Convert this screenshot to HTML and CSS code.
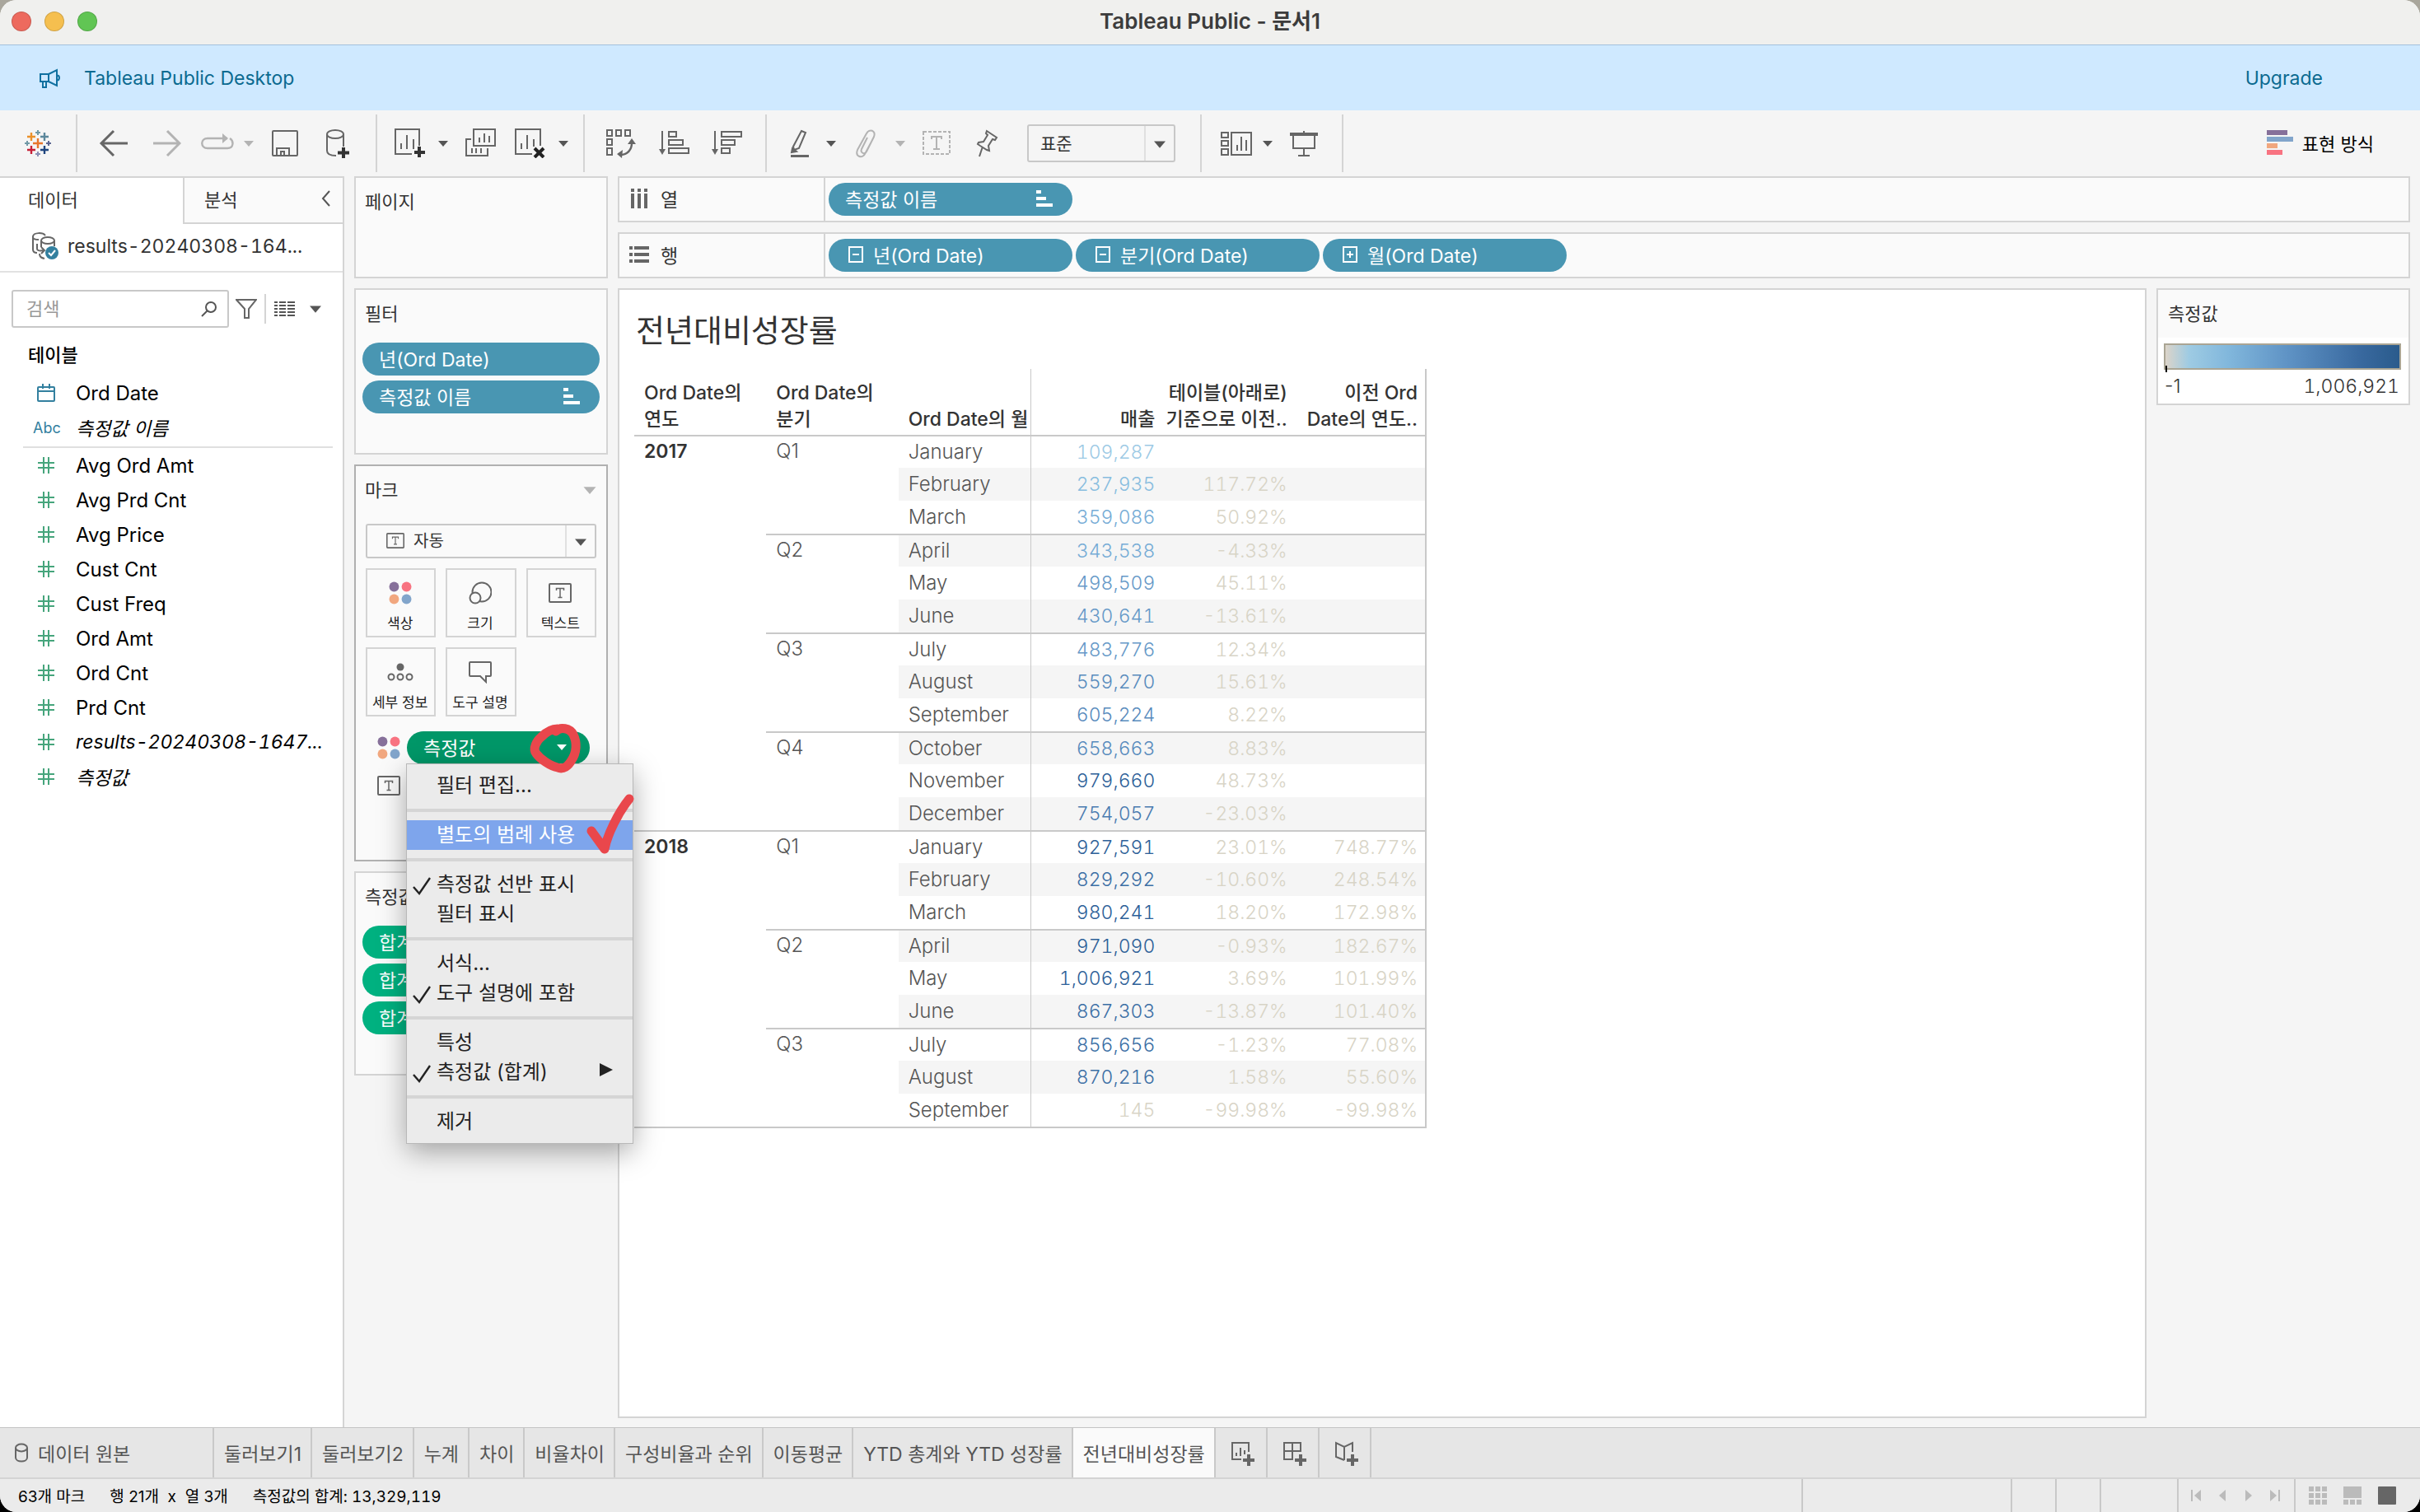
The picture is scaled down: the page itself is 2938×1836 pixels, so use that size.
FILE: index.html
```html
<!DOCTYPE html>
<html lang="ko">

<head>
    <meta charset="UTF-8">
    <meta name="viewport" content="width=device-width, initial-scale=1.0">
    <title>Tableau Public - 문서1</title>
    <link rel="stylesheet" href="styles.css">
</head>

<body>

    <!-- Shared icon shapes -->
    <svg class="sprite" aria-hidden="true">
        <symbol id="caret" viewBox="0 0 12 8"><path d="M0 1h12L6 8z" fill="currentColor"/></symbol>
        <symbol id="hash" viewBox="0 0 22 22"><path d="M8 1v20M14 1v20M1 8h20M1 14h20" fill="none" stroke="#46a57c" stroke-width="2"/></symbol>
        <symbol id="sort" viewBox="0 0 20 20"><path d="M0 0h6v4H0zM0 8h12v4H0zM0 16h20v4H0z" fill="currentColor"/></symbol>
        <symbol id="dots" viewBox="0 0 26 26"><circle cx="6" cy="6" r="5.5" fill="#86709a"/><circle cx="20" cy="6" r="5.5" fill="#f87381"/><circle cx="6" cy="20" r="5.5" fill="#f1a77f"/><circle cx="20" cy="20" r="5.5" fill="#82a5cb"/></symbol>
        <symbol id="textbox" viewBox="0 0 28 24"><rect x="1" y="1" width="26" height="22" rx="1" fill="none" stroke="#666" stroke-width="2"/><path d="M9.500 9V6.500h9V9M14 6.500v11M11.500 17.500h5" fill="none" stroke="#666" stroke-width="1.500"/></symbol>
        <symbol id="check" viewBox="0 0 22 22"><path d="M1 12l7 8L21 1" fill="none" stroke="#222" stroke-width="2.400"/></symbol>
    </svg>

    <div class="window">
        <header class="titlebar">
            <div class="lights"><span class="light red"></span><span class="light yellow"></span><span class="light green"></span></div>
            <h1 class="window-title">Tableau Public - 문서1</h1>
        </header>

        <div class="banner">
            <svg width="26" height="24" viewBox="0 0 26 24" fill="none" stroke="#1070a0" stroke-width="2"><path d="M1 7h10v9H1zM11 7l10-5v19l-10-5M4 16v7h4v-7M21 8c4 1 4 6 0 7"/></svg>
            <span>Tableau Public Desktop</span>
            <a class="upgrade" href="#">Upgrade</a>
        </div>

        <!-- Toolbar -->
        <nav class="toolbar">
            <div class="tool-group logo-group">
                <button class="tool" aria-label="시작 페이지">
                    <svg width="36" height="36" viewBox="0 0 36 36" fill="none" stroke-width="2.400"><path d="M18 12v12M12 18h12" stroke="#e8762c"/><path d="M10 5v10M5 10h10" stroke="#eb912b"/><path d="M26 5v10M21 10h10" stroke="#5b879b"/><path d="M10 21v10M5 26h10" stroke="#c72037"/><path d="M26 21v10M21 26h10" stroke="#1f457e"/><path d="M18 2v6M15 5h6M5 15v6M2 18h6" stroke="#7199a6" stroke-width="2"/><path d="M18 28v6M15 31h6" stroke="#8a8fb5" stroke-width="2"/><path d="M31 15v6M28 18h6" stroke="#5c6692" stroke-width="2"/></svg>
                </button>
            </div>
            <div class="tool-group history-group">
                <button class="tool" aria-label="실행 취소"><svg width="40" height="36" viewBox="0 0 40 36" fill="none" stroke="#666" stroke-width="3"><path d="M18 3L3 18l15 15M3 18h32"/></svg></button>
                <button class="tool" aria-label="다시 실행"><svg width="40" height="36" viewBox="0 0 40 36" fill="none" stroke="#b3b3b3" stroke-width="3"><path d="M23 3l15 15-15 15M38 18H6"/></svg></button>
                <div class="split">
                    <button class="tool wide" aria-label="재생"><svg width="44" height="36" viewBox="0 0 44 36" fill="none" stroke="#b3b3b3" stroke-width="2.400"><path d="M36 12h-24c-9 0-9 12 0 12h24c8 0 8-9 3-12"/><path d="M30 6v12l7-6z" fill="#b3b3b3" stroke="none"/></svg></button>
                    <button class="caret off" aria-label="재생 옵션"><svg width="12" height="8"><use href="#caret"/></svg></button>
                </div>
                <button class="tool" aria-label="저장"><svg width="40" height="36" viewBox="0 0 40 36" fill="none" stroke="#666" stroke-width="2"><rect x="3" y="3" width="30" height="30" rx="1"/><path d="M8 33V24h15v9M13 33v-5h4v5"/></svg></button>
                <button class="tool" aria-label="새 데이터 원본"><svg width="40" height="36" viewBox="0 0 40 36" fill="none" stroke="#666" stroke-width="2"><ellipse cx="19" cy="7" rx="10" ry="5"/><path d="M9 7v20c0 4 4 6 11 6M29 7v15"/><path d="M29 23v13M22 29.500h14" stroke="#333" stroke-width="4"/></svg></button>
            </div>
            <div class="tool-group sheet-group">
                <div class="split">
                    <button class="tool" aria-label="새 워크시트"><svg width="40" height="36" viewBox="0 0 40 36" fill="none" stroke="#666" stroke-width="2"><path d="M31 21V1H2v30h20M9 18v7M16 8v17M24 13v12"/><path d="M31 22v13M25 29h13" stroke="#333" stroke-width="4"/></svg></button>
                    <button class="caret" aria-label="새 워크시트 옵션"><svg width="12" height="8"><use href="#caret"/></svg></button>
                </div>
                <button class="tool" aria-label="복제"><svg width="40" height="36" viewBox="0 0 40 36" fill="none" stroke="#666" stroke-width="2"><rect x="11" y="1" width="26" height="20"/><path d="M8 13H2v20h26v-9M18 11v6M24 6v11M30 9v8M9 24v6M14 24v6M20 24v6"/></svg></button>
                <div class="split">
                    <button class="tool" aria-label="시트 지우기"><svg width="40" height="36" viewBox="0 0 40 36" fill="none" stroke="#666" stroke-width="2"><path d="M32 21V1H2v30h20M9 18v7M16 8v17M24 13v9"/><path d="M25 24l11 11M36 24L25 35" stroke="#222" stroke-width="4"/></svg></button>
                    <button class="caret" aria-label="지우기 옵션"><svg width="12" height="8"><use href="#caret"/></svg></button>
                </div>
            </div>
            <div class="tool-group sort-group">
                <button class="tool" aria-label="행과 열 바꾸기"><svg width="40" height="36" viewBox="0 0 40 36" fill="none" stroke="#666" stroke-width="2"><path d="M1 2h6v7H1zM12 2h6v7h-6zM23 2h6v7h-6zM1 13h6v7H1zM1 24h6v8H1z"/><path d="M31 18c0 7-5 14-13 14" stroke-width="2.400"/><path d="M26 19l5-7 5 7zM20 26l-7 5 6 5z" fill="#666" stroke="none"/></svg></button>
                <button class="tool" aria-label="오름차순 정렬"><svg width="40" height="36" viewBox="0 0 40 36" fill="none" stroke="#666" stroke-width="2"><path d="M4 3v24M12 4h9v6h-9zM12 14h17v6H12zM12 24h24v6H12z"/><path d="M0 25h8l-4 7z" fill="#666" stroke="none"/></svg></button>
                <button class="tool" aria-label="내림차순 정렬"><svg width="40" height="36" viewBox="0 0 40 36" fill="none" stroke="#666" stroke-width="2"><path d="M4 3v24M12 4h24v6H12zM12 14h16v6H12zM12 24h10v6H12z"/><path d="M0 25h8l-4 7z" fill="#666" stroke="none"/></svg></button>
            </div>
            <div class="tool-group">
                <div class="split">
                    <button class="tool" aria-label="하이라이트"><svg width="40" height="36" viewBox="0 0 40 36" fill="none" stroke="#666" stroke-width="2"><path d="M22 3l5 2-8 19-6 2-1-4z"/><path d="M11 24l5 4-6 1z" fill="#666"/><path d="M9 33.500h22" stroke-width="3"/></svg></button>
                    <button class="caret" aria-label="하이라이트 옵션"><svg width="12" height="8"><use href="#caret"/></svg></button>
                </div>
                <div class="split">
                    <button class="tool" aria-label="그룹"><svg width="40" height="36" viewBox="0 0 40 36" fill="none" stroke="#b3b3b3" stroke-width="2"><path d="M18 11l-7 14c-2 5 4 7 6 3l9-18c3-8-6-10-9-4L6 26c-3 8 5 11 9 5l8-15"/></svg></button>
                    <button class="caret off" aria-label="그룹 옵션"><svg width="12" height="8"><use href="#caret"/></svg></button>
                </div>
                <button class="tool" aria-label="마크 레이블 표시"><svg width="40" height="36" viewBox="0 0 40 36" fill="none" stroke="#b3b3b3" stroke-width="2"><rect x="2" y="4" width="32" height="27" stroke-dasharray="4 2"/><path d="M12 13V10h12v3M18 10v15M14 25h8"/></svg></button>
                <button class="tool" aria-label="고정"><svg width="40" height="36" viewBox="0 0 40 36" fill="none" stroke="#666" stroke-width="2"><path d="M19 3l12 8-2 3-3-1-5 8 1 6-3-1-8-5-3-2 1-2 6-1 5-8-2-2zM14 22L10 34"/></svg></button>
                <div class="fit-select">
                    <select class="select" aria-label="맞춤"><option>표준</option></select>
                    <svg class="select-arrow" width="14" height="10"><use href="#caret"/></svg>
                </div>
            </div>
            <div class="tool-group last-group">
                <div class="split">
                    <button class="tool" aria-label="카드 표시"><svg width="40" height="36" viewBox="0 0 40 36" fill="none" stroke="#666" stroke-width="2"><path d="M2 5h8v6H2zM2 15h8v6H2zM2 25h8v7H2zM14 5h24v27H14zM21 20v7M26 10v17M32 14v13"/></svg></button>
                    <button class="caret" aria-label="카드 옵션"><svg width="12" height="8"><use href="#caret"/></svg></button>
                </div>
                <button class="tool" aria-label="프레젠테이션 모드"><svg width="40" height="36" viewBox="0 0 40 36" fill="none" stroke="#666" stroke-width="2"><path d="M18 3v4M5 8v16h26V8M18 24v9M11 33h14"/><path d="M1 7h34" stroke-width="4"/></svg></button>
            </div>
            <button class="show-me">
                <svg width="32" height="30" viewBox="0 0 32 30"><path d="M0 0h25v6H0z" fill="#86709a"/><path d="M0 8h32v6H0z" fill="#82a5cb"/><path d="M0 16h13v6H0z" fill="#f1a77f"/><path d="M0 24h19v6H0z" fill="#f87381"/></svg>
                표현 방식
            </button>
        </nav>

        <main class="workspace">
            <!-- Data pane -->
            <aside class="data-pane">
                <div class="pane-tabs">
                    <button class="pane-tab active">데이터</button>
                    <button class="pane-tab">분석 <svg width="12" height="20" viewBox="0 0 12 20" fill="none" stroke="#555" stroke-width="2"><path d="M10 1L2 10l8 9"/></svg></button>
                </div>
                <div class="source">
                    <svg width="34" height="34" viewBox="0 0 34 34" fill="none" stroke="#666" stroke-width="2"><path d="M17 4c-3-4-14-4-15 1v16c0 3 2 4 5 4M2 6c0 2 3 3 7 3"/><ellipse cx="20" cy="10" rx="8" ry="4"/><path d="M12 10v8M28 10v7M7 14v6c0 2 2 3 8 2M12 18l4 4-4 4M10 26c0 4 2 5 6 6"/><circle cx="25" cy="25" r="8" fill="#33809f" stroke="none"/><path d="M21 25l3 3 5-6" stroke="#fff"/></svg>
                    <span class="digits">results-20240308-164...</span>
                </div>
                <div class="search-row">
                    <div class="search">
                        <input type="text" placeholder="검색" aria-label="검색">
                        <svg width="20" height="20" viewBox="0 0 20 20" fill="none" stroke="#555" stroke-width="2"><circle cx="12" cy="8" r="6"/><path d="M8 12l-7 7"/></svg>
                    </div>
                    <button class="plain" aria-label="필터"><svg width="26" height="26" viewBox="0 0 26 26" fill="none" stroke="#666" stroke-width="2"><path d="M1 2h24l-9 11v11h-5V13z"/></svg></button>
                    <span class="search-sep"></span>
                    <button class="plain view-by" aria-label="보기">
                        <svg width="25" height="20" viewBox="0 0 25 20" stroke="#555" stroke-width="2"><path d="M0 2h25M0 6h25M0 10h25M0 14h25M0 18h25" stroke-dasharray="4 2 8 2 9 0"/></svg>
                        <svg width="14" height="10"><use href="#caret"/></svg>
                    </button>
                </div>
                <h2 class="tables-title">테이블</h2>
                <ul class="fields dims">
                    <li><svg width="22" height="22" viewBox="0 0 22 22" fill="none" stroke="#33809f" stroke-width="2"><rect x="1" y="4" width="20" height="17" rx="1"/><path d="M1 9h20M7 0v6M15 0v6"/></svg>Ord Date</li>
                    <li><span class="abc">Abc</span><i>측정값 이름</i></li>
                </ul>
                <ul class="fields">
                    <li><svg width="22" height="22"><use href="#hash"/></svg>Avg Ord Amt</li>
                    <li><svg width="22" height="22"><use href="#hash"/></svg>Avg Prd Cnt</li>
                    <li><svg width="22" height="22"><use href="#hash"/></svg>Avg Price</li>
                    <li><svg width="22" height="22"><use href="#hash"/></svg>Cust Cnt</li>
                    <li><svg width="22" height="22"><use href="#hash"/></svg>Cust Freq</li>
                    <li><svg width="22" height="22"><use href="#hash"/></svg>Ord Amt</li>
                    <li><svg width="22" height="22"><use href="#hash"/></svg>Ord Cnt</li>
                    <li><svg width="22" height="22"><use href="#hash"/></svg>Prd Cnt</li>
                    <li><svg width="22" height="22"><use href="#hash"/></svg><i class="digits">results-20240308-1647...</i></li>
                    <li><svg width="22" height="22"><use href="#hash"/></svg><i>측정값</i></li>
                </ul>
            </aside>

            <!-- Cards column -->
            <section class="cards">
                <div class="card pages"><h2>페이지</h2></div>
                <div class="card filters">
                    <h2>필터</h2>
                    <button class="pill">년(Ord Date)</button>
                    <button class="pill">측정값 이름 <svg class="pill-sort" width="20" height="20"><use href="#sort"/></svg></button>
                </div>
                <div class="card marks">
                    <h2>마크 <svg width="16" height="10"><use href="#caret"/></svg></h2>
                    <div class="mark-type">
                        <svg class="type-icon" width="22" height="19"><use href="#textbox"/></svg>
                        <select class="select" aria-label="마크 유형"><option>자동</option></select>
                        <svg class="select-arrow" width="14" height="10"><use href="#caret"/></svg>
                    </div>
                    <div class="mark-grid">
                        <button class="mark-btn"><svg width="28" height="28"><use href="#dots"/></svg>색상</button>
                        <button class="mark-btn"><svg width="28" height="28" viewBox="0 0 28 28" fill="#fafafa" stroke="#666" stroke-width="2"><circle cx="16" cy="13" r="11.500"/><circle cx="8" cy="20" r="6.500"/></svg>크기</button>
                        <button class="mark-btn"><svg width="28" height="28"><use href="#textbox"/></svg>텍스트</button>
                        <button class="mark-btn"><svg width="32" height="28" viewBox="0 0 32 28" fill="none" stroke="#666" stroke-width="2"><circle cx="16" cy="8" r="4.500" fill="#666" stroke="none"/><circle cx="5" cy="20" r="3.500"/><circle cx="16" cy="20" r="3.500"/><circle cx="27" cy="20" r="3.500"/></svg>세부 정보</button>
                        <button class="mark-btn"><svg width="28" height="28" viewBox="0 0 28 28" fill="none" stroke="#666" stroke-width="2"><path d="M2 2h24q1 0 1 1v15q0 1-1 1h-5v7l-7-7H2q-1 0-1-1V3q0-1 1-1z"/></svg>도구 설명</button>
                    </div>
                    <div class="mark-rows">
                        <svg width="28" height="28"><use href="#dots"/></svg>
                        <div class="pill-wrap">
                            <button class="pill green open">측정값 <svg class="pill-caret" width="12" height="8"><use href="#caret"/></svg></button>
                            <!-- Context menu of the pill -->
                            <ul class="menu">
                                <li><button>필터 편집...</button></li>
                                <li class="sep"></li>
                                <li><button class="hot">별도의 범례 사용</button></li>
                                <li class="sep"></li>
                                <li><button><svg class="tick" width="22" height="22"><use href="#check"/></svg>측정값 선반 표시</button></li>
                                <li><button>필터 표시</button></li>
                                <li class="sep"></li>
                                <li><button>서식...</button></li>
                                <li><button><svg class="tick" width="22" height="22"><use href="#check"/></svg>도구 설명에 포함</button></li>
                                <li class="sep"></li>
                                <li><button>특성</button></li>
                                <li><button><svg class="tick" width="22" height="22"><use href="#check"/></svg>측정값 (합계)<svg class="submenu" width="16" height="16" viewBox="0 0 16 16"><path d="M0 0l16 8-16 8z" fill="#222"/></svg></button></li>
                                <li class="sep"></li>
                                <li><button>제거</button></li>
                            </ul>
                            <svg class="pen" width="150" height="180" viewBox="0 0 150 180" fill="none" stroke="#e9474c" stroke-width="11" stroke-linecap="round" stroke-linejoin="round"><path d="M41 20C46 14 58 16 62 24C67 34 66 46 60 55C56 62 50 67 43 64C34 62 22 54 17 47C12 41 18 31 23 27C30 20 37 17 43 17"/><path d="M84 141L100 163C103 146 117 118 130 102"/></svg>
                        </div>
                        <svg width="28" height="24"><use href="#textbox"/></svg>
                    </div>
                </div>
                <div class="card values">
                    <h2>측정값</h2>
                    <button class="pill green">합계</button>
                    <button class="pill green">합계</button>
                    <button class="pill green">합계</button>
                </div>
            </section>

            <section class="canvas">
                <div class="shelf">
                    <div class="shelf-name"><svg width="24" height="24" viewBox="0 0 24 24" fill="#666"><path d="M2 0h4v4H2zM10 0h4v4h-4zM18 0h4v4h-4zM2 6h4v18H2zM10 6h4v18h-4zM18 6h4v18h-4z"/></svg>열</div>
                    <div class="shelf-pills">
                        <button class="pill">측정값 이름 <svg class="pill-sort" width="20" height="20"><use href="#sort"/></svg></button>
                    </div>
                </div>
                <div class="shelf">
                    <div class="shelf-name"><svg width="24" height="24" viewBox="0 0 24 24" fill="#666"><path d="M0 2h4v4H0zM0 10h4v4H0zM0 18h4v4H0zM6 2h18v4H6zM6 10h18v4H6zM6 18h18v4H6z"/></svg>행</div>
                    <div class="shelf-pills">
                        <button class="pill date"><svg width="18" height="20" viewBox="0 0 18 20" fill="none" stroke="#fff" stroke-width="2"><path d="M1 1h16v18H1zM5 10h8"/></svg>년(Ord Date)</button>
                        <button class="pill date"><svg width="18" height="20" viewBox="0 0 18 20" fill="none" stroke="#fff" stroke-width="2"><path d="M1 1h16v18H1zM5 10h8"/></svg>분기(Ord Date)</button>
                        <button class="pill date"><svg width="18" height="20" viewBox="0 0 18 20" fill="none" stroke="#fff" stroke-width="2"><path d="M1 1h16v18H1zM5 10h8M9 6v8"/></svg>월(Ord Date)</button>
                    </div>
                </div>

                <div class="view-row">
                    <div class="view">
                        <h2 class="sheet-title">전년대비성장률</h2>
                        <table class="crosstab">
                            <thead>
                                <tr>
                                    <th>Ord Date의<br>연도</th>
                                    <th>Ord Date의<br>분기</th>
                                    <th>Ord Date의 월</th>
                                    <th class="num first">매출</th>
                                    <th class="num">테이블(아래로)<br>기준으로 이전..</th>
                                    <th class="num last">이전 Ord<br>Date의 연도..</th>
                                </tr>
                            </thead>
                            <tbody>
                                <tr class="rule"><th rowspan="12" class="year">2017</th><td rowspan="3" class="quarter">Q1</td><td class="month">January</td><td class="num first b1">109,287</td><td class="num"></td><td class="num last"></td></tr>
                                <tr class="band"><td class="month">February</td><td class="num first b2">237,935</td><td class="num">117.72%</td><td class="num last"></td></tr>
                                <tr><td class="month">March</td><td class="num first b3">359,086</td><td class="num">50.92%</td><td class="num last"></td></tr>
                                <tr class="rule band"><td rowspan="3" class="quarter">Q2</td><td class="month">April</td><td class="num first b3">343,538</td><td class="num">-4.33%</td><td class="num last"></td></tr>
                                <tr><td class="month">May</td><td class="num first b4">498,509</td><td class="num">45.11%</td><td class="num last"></td></tr>
                                <tr class="band"><td class="month">June</td><td class="num first b4">430,641</td><td class="num">-13.61%</td><td class="num last"></td></tr>
                                <tr class="rule"><td rowspan="3" class="quarter">Q3</td><td class="month">July</td><td class="num first b4">483,776</td><td class="num">12.34%</td><td class="num last"></td></tr>
                                <tr class="band"><td class="month">August</td><td class="num first b5">559,270</td><td class="num">15.61%</td><td class="num last"></td></tr>
                                <tr><td class="month">September</td><td class="num first b5">605,224</td><td class="num">8.22%</td><td class="num last"></td></tr>
                                <tr class="rule band"><td rowspan="3" class="quarter">Q4</td><td class="month">October</td><td class="num first b5">658,663</td><td class="num">8.83%</td><td class="num last"></td></tr>
                                <tr><td class="month">November</td><td class="num first b8">979,660</td><td class="num">48.73%</td><td class="num last"></td></tr>
                                <tr class="band"><td class="month">December</td><td class="num first b6">754,057</td><td class="num">-23.03%</td><td class="num last"></td></tr>
                                <tr class="rule"><th rowspan="9" class="year">2018</th><td rowspan="3" class="quarter">Q1</td><td class="month">January</td><td class="num first b8">927,591</td><td class="num">23.01%</td><td class="num last">748.77%</td></tr>
                                <tr class="band"><td class="month">February</td><td class="num first b7">829,292</td><td class="num">-10.60%</td><td class="num last">248.54%</td></tr>
                                <tr><td class="month">March</td><td class="num first b8">980,241</td><td class="num">18.20%</td><td class="num last">172.98%</td></tr>
                                <tr class="rule band"><td rowspan="3" class="quarter">Q2</td><td class="month">April</td><td class="num first b8">971,090</td><td class="num">-0.93%</td><td class="num last">182.67%</td></tr>
                                <tr><td class="month">May</td><td class="num first b8">1,006,921</td><td class="num">3.69%</td><td class="num last">101.99%</td></tr>
                                <tr class="band"><td class="month">June</td><td class="num first b7">867,303</td><td class="num">-13.87%</td><td class="num last">101.40%</td></tr>
                                <tr class="rule"><td rowspan="3" class="quarter">Q3</td><td class="month">July</td><td class="num first b7">856,656</td><td class="num">-1.23%</td><td class="num last">77.08%</td></tr>
                                <tr class="band"><td class="month">August</td><td class="num first b7">870,216</td><td class="num">1.58%</td><td class="num last">55.60%</td></tr>
                                <tr><td class="month">September</td><td class="num first">145</td><td class="num">-99.98%</td><td class="num last">-99.98%</td></tr>
                            </tbody>
                        </table>
                    </div>
                    <div class="legend">
                        <h2>측정값</h2>
                        <div class="legend-body">
                            <div class="ramp"><span class="ramp-mark"></span></div>
                            <div class="ramp-labels"><span>-1</span><span class="digits">1,006,921</span></div>
                        </div>
                    </div>
                </div>
            </section>
        </main>

        <!-- Sheet tabs -->
        <nav class="sheets">
            <button class="sheet source-tab"><svg width="16" height="24" viewBox="0 0 16 24" fill="none" stroke="#666" stroke-width="2"><ellipse cx="8" cy="6" rx="7" ry="4.500"/><path d="M1 6v12c0 6 14 6 14 0V6"/></svg>데이터 원본</button>
            <button class="sheet">둘러보기1</button>
            <button class="sheet">둘러보기2</button>
            <button class="sheet">누계</button>
            <button class="sheet">차이</button>
            <button class="sheet">비율차이</button>
            <button class="sheet">구성비율과 순위</button>
            <button class="sheet">이동평균</button>
            <button class="sheet">YTD 총계와 YTD 성장률</button>
            <button class="sheet active">전년대비성장률</button>
            <button class="sheet new" aria-label="새 워크시트"><svg width="30" height="30" viewBox="0 0 30 30" fill="none" stroke="#666" stroke-width="2"><path d="M22 13V2H2v20h11M7 14v4M12 8v10M17 11v5"/><path d="M22 16v14M15 23h14" stroke-width="4"/></svg></button>
            <button class="sheet new" aria-label="새 대시보드"><svg width="30" height="30" viewBox="0 0 30 30" fill="none" stroke="#666" stroke-width="2"><path d="M22 13V2H2v20h11M2 12h20M12 2v20"/><path d="M22 16v14M15 23h14" stroke-width="4"/></svg></button>
            <button class="sheet new" aria-label="새 스토리"><svg width="30" height="30" viewBox="0 0 30 30" fill="none" stroke="#666" stroke-width="2"><path d="M12 23L2 19V2l10 5 10-5v11M12 7v16"/><path d="M22 16v14M15 23h14" stroke-width="4"/></svg></button>
        </nav>

        <footer class="status">
            <span>63개 마크</span>
            <span>행 21개 &nbsp;x &nbsp;열 3개</span>
            <span class="digits">측정값의 합계: 13,329,119</span>
            <div class="status-cells">
                <div class="cell long"></div>
                <div class="cell short"></div>
                <div class="cell short"></div>
                <div class="cell mid"></div>
                <div class="cell nav-cell">
                    <button class="plain" aria-label="처음"><svg width="12" height="14" viewBox="0 0 12 14" fill="#bbb"><path d="M0 0h2v14H0zM12 0v14L4 7z"/></svg></button>
                    <button class="plain" aria-label="이전"><svg width="12" height="14" viewBox="0 0 12 14" fill="#bbb"><path d="M10 0v14L2 7z"/></svg></button>
                    <button class="plain" aria-label="다음"><svg width="12" height="14" viewBox="0 0 12 14" fill="#bbb"><path d="M2 0v14l8-7z"/></svg></button>
                    <button class="plain" aria-label="마지막"><svg width="12" height="14" viewBox="0 0 12 14" fill="#bbb"><path d="M10 0h2v14h-2zM0 0v14l8-7z"/></svg></button>
                </div>
                <div class="cell view-cell">
                    <button class="plain" aria-label="시트 정렬기"><svg width="22" height="22" viewBox="0 0 22 22" fill="#bbb"><path d="M0 0h6v6H0zM8 0h6v6H8zM16 0h6v6h-6zM0 8h6v6H0zM8 8h6v6H8zM16 8h6v6h-6zM0 16h6v6H0zM8 16h6v6H8zM16 16h6v6h-6z"/></svg></button>
                    <button class="plain" aria-label="필름 스트립"><svg width="22" height="22" viewBox="0 0 22 22" fill="#bbb"><path d="M0 0h22v14H0zM0 16h6v6H0zM8 16h6v6H8zM16 16h6v6h-6z"/></svg></button>
                    <button class="plain" aria-label="탭 표시"><svg width="22" height="22" viewBox="0 0 22 22"><rect width="22" height="22" rx="1" fill="#666"/></svg></button>
                </div>
            </div>
        </footer>
    </div>

</body>

</html>
```
FILE: styles.css
```css
* {
    margin: 0;
    padding: 0;
    box-sizing: border-box;
}

html {
    background: linear-gradient(#a9a69c 50%, #000 50%);
}

body,
button,
input,
select {
    font-family: Inter, "Noto Sans CJK KR", sans-serif;
    font-size: 23px;
    color: #333;
}

button {
    background: none;
    border: none;
    cursor: pointer;
}

svg {
    display: block;
    flex: none;
}

ul {
    list-style: none;
}

h2 {
    font-size: 22px;
    font-weight: 400;
}

.digits {
    font-variant-numeric: tabular-nums;
}

.sprite {
    position: absolute;
    width: 0;
    height: 0;
}

.window {
    display: flex;
    flex-direction: column;
    min-height: 100vh;
    background: #f5f5f5;
    border-radius: 20px;
    overflow: hidden;
}

/* Title bar */
.titlebar {
    display: grid;
    grid-template-columns: 1fr auto 1fr;
    align-items: center;
    height: 55px;
    padding: 0 14px 2px;
    background: #f0f0ee;
    border-bottom: 1px solid #a3c1dc;
}

.lights {
    display: flex;
    gap: 16px;
}

.light {
    width: 24px;
    height: 24px;
    border-radius: 50%;
    border: 1px solid rgba(0, 0, 0, 0.15);
}

.red {
    background: #ed6a5e;
}

.yellow {
    background: #f5bf4f;
}

.green {
    background: #61c554;
}

.window-title {
    padding-bottom: 5px;
    font-size: 26px;
    font-weight: 600;
    color: #3c3c3c;
}

/* Blue banner */
.banner {
    display: flex;
    align-items: center;
    gap: 28px;
    height: 79px;
    padding: 0 118px 0 48px;
    background: #cfe9ff;
    color: #0b6a90;
}

.upgrade {
    margin-left: auto;
    color: #0b6a90;
    text-decoration: none;
}

/* Toolbar */
.toolbar {
    display: flex;
    align-items: center;
    height: 80px;
}

.tool-group {
    display: flex;
    align-items: center;
    gap: 20px;
    height: 70px;
    padding: 0 18px 0 20px;
    border-right: 2px solid #d4d4d4;
}

.logo-group {
    padding: 0 24px 0 28px;
}

.history-group {
    padding: 0 28px 0 26px;
}

.sort-group {
    gap: 24px;
    padding: 0 25px 0 26px;
}

.last-group {
    padding: 0 24px 0 22px;
}

.split {
    display: flex;
    align-items: center;
    gap: 12px;
}

.sheet-group .split {
    gap: 14px;
}

.tool {
    width: 40px;
    height: 40px;
}

.wide {
    width: 44px;
}

.caret {
    color: #555;
}

.caret.off {
    color: #b3b3b3;
}

.select {
    appearance: none;
    width: 100%;
    height: 100%;
    padding-left: 14px;
    background: none;
    border: 2px solid #c8c8c8;
    border-radius: 3px;
    font-size: 21px;
}

.fit-select,
.mark-type {
    position: relative;
    width: 180px;
    height: 46px;
    color: #555;
}

.fit-select {
    margin: 0 12px 0 8px;
}

.fit-select::after,
.mark-type::after {
    content: "";
    position: absolute;
    top: 2px;
    bottom: 2px;
    right: 36px;
    width: 2px;
    background: #e0e0e0;
}

.select-arrow {
    position: absolute;
    right: 12px;
    top: 50%;
    margin-top: -4px;
    pointer-events: none;
}

.show-me {
    display: flex;
    align-items: center;
    gap: 11px;
    margin-left: auto;
    padding: 0 56px 2px 0;
    font-size: 22px;
    color: #000;
}

/* Workspace */
.workspace {
    display: flex;
    flex: 1;
}

.data-pane {
    width: 418px;
    flex: none;
    background: #fff;
    border-top: 2px solid #d4d4d4;
    border-right: 2px solid #d4d4d4;
}

.pane-tabs {
    display: flex;
    height: 56px;
}

.pane-tab {
    display: flex;
    align-items: center;
    justify-content: space-between;
    width: 194px;
    padding: 0 14px 4px 24px;
    background: #fafafa;
    border-left: 2px solid #d4d4d4;
    border-bottom: 2px solid #d4d4d4;
    font-size: 22px;
}

.pane-tab.active {
    flex: 1;
    padding: 0 0 6px 34px;
    background: #fff;
    border: none;
}

.source {
    display: flex;
    align-items: center;
    gap: 10px;
    height: 59px;
    padding: 0 0 3px 38px;
    border-bottom: 2px solid #e2e2e2;
}

.search-row {
    display: flex;
    align-items: center;
    margin-top: 21px;
    padding-left: 14px;
}

.search {
    display: flex;
    align-items: center;
    width: 264px;
    height: 46px;
    padding: 0 12px 0 16px;
    border: 2px solid #c8c8c8;
    border-radius: 3px;
}

.search input {
    flex: 1;
    min-width: 0;
    border: none;
    outline: none;
    background: none;
    font-size: 22px;
}

.search input::placeholder {
    color: #999;
}

.plain {
    display: flex;
    align-items: center;
    color: #555;
}

.search-row > .plain {
    margin-left: 8px;
}

.search-sep {
    width: 2px;
    height: 36px;
    margin: 0 2px 0 9px;
    background: #d4d4d4;
}

.view-by {
    gap: 18px;
}

.tables-title {
    padding-left: 34px;
    margin-top: 16px;
    line-height: 34px;
    font-weight: 500;
    color: #000;
}

.dims {
    margin: 8px 12px 0 28px;
    padding-bottom: 2px;
    border-bottom: 2px solid #e0e0e0;
}

.fields li {
    display: flex;
    align-items: center;
    gap: 25px;
    height: 42px;
    padding-left: 45px;
    font-size: 24px;
    color: #000;
    white-space: nowrap;
}

.fields i {
    font-size: 23px;
}

.dims li {
    padding-left: 17px;
}

.abc {
    width: 32px;
    margin: 0 -5px;
    font-size: 18px;
    color: #33809f;
}

/* Cards */
.cards {
    display: flex;
    flex-direction: column;
    gap: 12px;
    width: 308px;
    flex: none;
    margin: 0 12px;
}

.card {
    background: #fafafa;
    border: 2px solid #d4d4d4;
    padding: 12px 8px;
}

.card h2 {
    display: flex;
    align-items: center;
    justify-content: space-between;
    padding: 0 4px 0 3px;
    line-height: 34px;
}

.pages {
    height: 124px;
}

.filters {
    height: 202px;
}

.filters h2,
.values h2 {
    margin-bottom: 18px;
}

.marks {
    height: 482px;
    border-color: #b0b0b0;
}

.marks h2 svg {
    color: #b3b3b3;
}

.values {
    height: 248px;
}

.pill {
    display: flex;
    align-items: center;
    gap: 12px;
    width: 100%;
    height: 40px;
    margin-bottom: 6px;
    padding: 0 24px 3px 20px;
    border-radius: 20px;
    background: #4996b2;
    color: #fff;
}

.pill-sort,
.pill-caret {
    margin-left: auto;
}

.green.pill {
    background: #00b180;
}

.green.open {
    background: #009768;
}

.mark-type {
    width: 280px;
    height: 42px;
    margin: 24px 4px 12px;
}

.mark-type .select {
    padding-left: 56px;
    font-size: 20px;
}

.type-icon {
    position: absolute;
    left: 25px;
    top: 11px;
}

.mark-grid {
    display: grid;
    grid-template-columns: repeat(3, 1fr);
    gap: 12px;
    margin: 0 4px;
}

.mark-btn {
    display: flex;
    flex-direction: column;
    align-items: center;
    justify-content: flex-end;
    gap: 10px;
    height: 84px;
    padding: 0 2px 2px 0;
    border: 2px solid #d4d4d4;
    font-size: 17px;
    line-height: 26px;
    color: #222;
    white-space: nowrap;
}

.mark-rows {
    display: grid;
    grid-template-columns: 28px 222px;
    column-gap: 8px;
    row-gap: 14px;
    align-items: center;
    margin: 18px 0 0 18px;
}

.pill-wrap {
    position: relative;
}

.pill-wrap .pill {
    margin: 0;
    padding-right: 28px;
}

/* Context menu */
.menu {
    position: absolute;
    left: 0;
    top: 100%;
    z-index: 2;
    width: 274px;
    padding: 8px 0;
    background: #ebebeb;
    box-shadow: 0 0 0 1px #b8b8b8, 0 10px 32px rgba(0, 0, 0, 0.35);
}

.menu button {
    display: flex;
    align-items: center;
    position: relative;
    width: 100%;
    height: 36px;
    padding: 0 24px 6px 36px;
    font-size: 24px;
    color: #222;
    white-space: nowrap;
}

.menu .hot {
    background: #7ea5ec;
    color: #fff;
}

.menu .sep {
    height: 4px;
    margin: 10px 0;
    background: #d5d5d5;
}

.tick {
    position: absolute;
    left: 7px;
    top: 9px;
}

.submenu {
    margin-left: auto;
}

/* Red pen strokes over the pill and the menu */
.pen {
    position: absolute;
    left: 140px;
    top: -20px;
    z-index: 3;
    pointer-events: none;
}

/* Shelves and view */
.canvas {
    display: flex;
    flex-direction: column;
    gap: 12px;
    flex: 1;
    min-width: 0;
    margin-right: 12px;
    padding-bottom: 11px;
}

.shelf {
    display: flex;
    height: 56px;
    background: #fafafa;
    border: 2px solid #d4d4d4;
}

.shelf-name {
    display: flex;
    align-items: center;
    gap: 14px;
    width: 250px;
    padding-left: 12px;
    padding-bottom: 2px;
    border-right: 2px solid #d4d4d4;
}

.shelf-pills {
    display: flex;
    align-items: center;
    gap: 4px;
    padding-left: 4px;
}

.shelf-pills .pill {
    width: 296px;
    margin: 0;
}

.shelf-pills .date {
    padding-left: 24px;
}

.view-row {
    display: flex;
    flex: 1;
    gap: 12px;
    align-items: flex-start;
}

.view {
    flex: 1;
    align-self: stretch;
    padding-left: 18px;
    background: #fff;
    border: 2px solid #d4d4d4;
}

.sheet-title {
    padding: 2px 0 0 2px;
    font-size: 38px;
    line-height: 94px;
}

.crosstab {
    width: 962px;
    table-layout: fixed;
    border-spacing: 0;
    border-bottom: 2px solid #c9c9c9;
}

.crosstab th,
.crosstab td {
    height: 40px;
    padding: 0 0 0 12px;
    text-align: left;
    font-size: 24px;
    font-weight: 300;
    color: #555;
    line-height: 36px;
    white-space: nowrap;
}

.crosstab thead th {
    height: 80px;
    padding-bottom: 3px;
    vertical-align: bottom;
    font-size: 23px;
    font-weight: 500;
    line-height: 32px;
    color: #333;
}

.crosstab .year,
.crosstab .quarter {
    vertical-align: top;
}

.crosstab .year {
    font-size: 23px;
    font-weight: 600;
    color: #333;
}

.rule > * {
    border-top: 2px solid #c9c9c9;
}

.band .month,
.band .num {
    background: #f5f5f5;
}

.crosstab .num {
    padding: 0 9px 0 0;
    text-align: right;
}

.crosstab thead .num {
    padding-bottom: 3px;
}

.crosstab td.num {
    font-size: 23px;
    font-variant-numeric: tabular-nums;
    color: #d8d4c6;
}

.crosstab .first {
    border-left: 1px solid #c9c9c9;
}

.crosstab .last {
    border-right: 2px solid #c9c9c9;
}

/* Text colours of the sales scale, light to dark */
.crosstab td.b1 { color: #9dcae5; }
.crosstab td.b2 { color: #88bddf; }
.crosstab td.b3 { color: #76acd6; }
.crosstab td.b4 { color: #6699c8; }
.crosstab td.b5 { color: #588bbd; }
.crosstab td.b6 { color: #4a7bb0; }
.crosstab td.b7 { color: #3c6fa5; }
.crosstab td.b8 { color: #2d6098; }

/* Colour legend */
.legend {
    width: 308px;
    background: #fafafa;
    border: 2px solid #d4d4d4;
}

.legend h2 {
    padding-left: 12px;
    line-height: 58px;
}

.legend-body {
    padding: 7px 9px 3px 7px;
    background: #fff;
}

.ramp {
    position: relative;
    height: 32px;
    border: 2px solid #aaa594;
    background: linear-gradient(90deg, #dcd4c9, #9ecbe3 10%, #81b7dc 27%, #5f93c5 52%, #39699f 83%, #2a5b8c);
}

.ramp-mark {
    position: absolute;
    left: 0;
    top: 25px;
    width: 2px;
    height: 8px;
    background: #000;
}

.ramp-labels {
    display: flex;
    justify-content: space-between;
    padding: 2px 2px 0 1px;
    font-weight: 300;
    line-height: 36px;
}

/* Sheet tabs */
.sheets {
    display: flex;
    height: 63px;
    background: #e6e6e6;
    border-top: 1px solid #c4c4c4;
    border-bottom: 2px solid #d4d4d4;
}

.sheet {
    display: flex;
    align-items: center;
    gap: 12px;
    padding: 0 11px 1px 12px;
    border-right: 2px solid #c9c9c9;
    color: #555;
    white-space: nowrap;
}

.source-tab {
    width: 260px;
    padding-left: 18px;
}

.sheet.active {
    background: #fafafa;
}

.new {
    width: 63px;
    padding: 2px 16px 0 18px;
}

/* Status bar */
.status {
    display: flex;
    align-items: center;
    gap: 30px;
    height: 40px;
    padding-left: 22px;
    background: #ebebeb;
    font-size: 19px;
    color: #000;
}

.status span {
    padding-bottom: 2px;
}

.status-cells {
    display: flex;
    align-self: stretch;
    margin-left: auto;
}

.cell {
    display: flex;
    align-items: center;
    border-left: 2px solid #c9c9c9;
}

.long {
    width: 254px;
}

.short {
    width: 54px;
}

.mid {
    width: 94px;
}

.nav-cell {
    gap: 20px;
    width: 142px;
    padding-left: 15px;
}

.view-cell {
    gap: 20px;
    width: 153px;
    padding-left: 16px;
}
```
